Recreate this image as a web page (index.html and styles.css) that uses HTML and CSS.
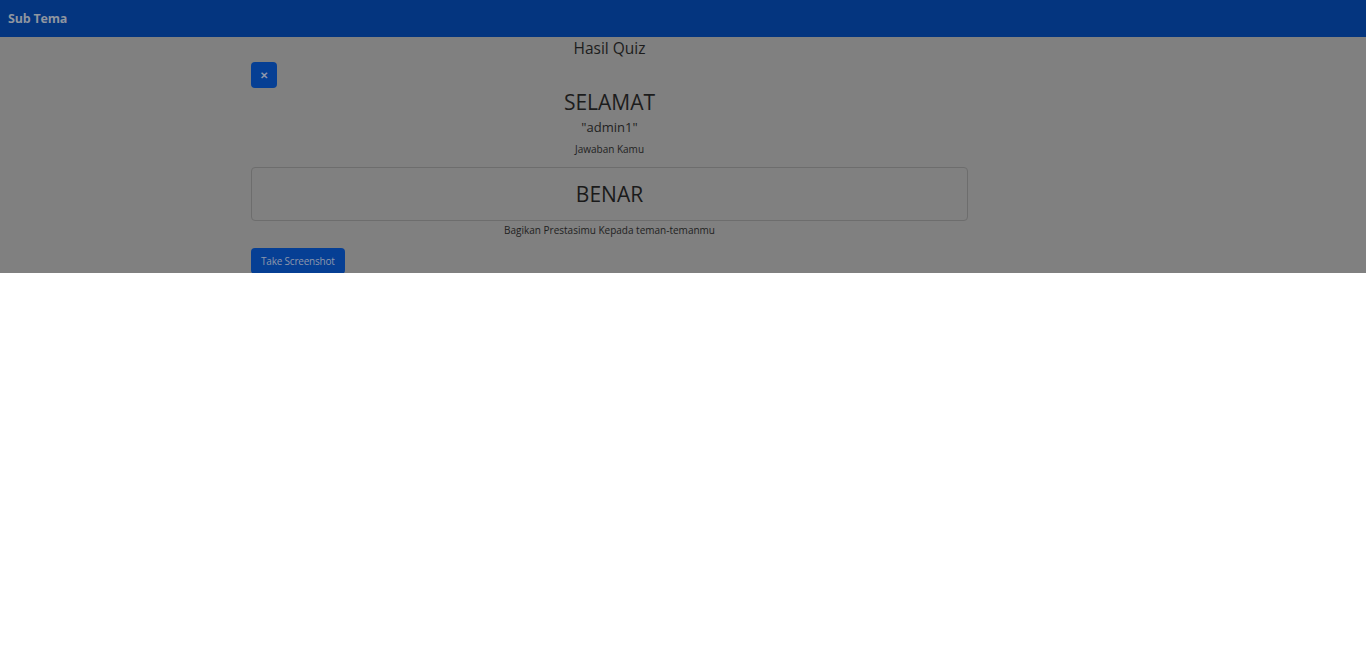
FILE: index.html
```html
<!DOCTYPE html>
<html>
<head>
<meta charset="utf-8">
<link rel="stylesheet" href="styles.css">
</head>
<body>
<header class="navbar"><span class="brand">Sub Tema</span></header>
<section class="overlay">
  <div class="modal">
    <div class="title">Hasil Quiz</div>
    <div class="close-row"><button class="btn close-btn">&#x2715;</button></div>
    <div class="selamat">SELAMAT</div>
    <div class="user">"admin1"</div>
    <div class="small">Jawaban Kamu</div>
    <div class="answer">BENAR</div>
    <div class="small share">Bagikan Prestasimu Kepada teman-temanmu</div>
    <div class="shot-row"><button class="btn shot-btn">Take Screenshot</button></div>
  </div>
</section>
</body>
</html>
```
FILE: styles.css
```css
* { box-sizing: border-box; }
body {
  margin: 0;
  font-family: "Open Sans", "Noto Sans", sans-serif;
  background: #fff;
  color: #1a1a1a;
}
.navbar {
  height: 37px;
  background: #04357f;
  display: flex;
  align-items: center;
  padding: 0 8px;
}
.brand {
  color: #8f95a0;
  font-weight: 700;
  font-size: 12.5px;
  letter-spacing: -0.2px;
}
.overlay {
  background: #808080;
  height: 236px;
  overflow: hidden;
}
.modal {
  width: 717px;
  margin-left: 251px;
  display: flex;
  flex-direction: column;
  align-items: center;
}
.title {
  font-size: 15.5px;
  line-height: 20px;
  margin-top: 1px;
  color: #1c1c1c;
}
.close-row, .shot-row {
  align-self: stretch;
  display: flex;
}
.btn {
  border: none;
  background: #063f94;
  color: #8e97ab;
  border-radius: 4px;
  font-family: inherit;
  padding: 0;
}
.close-btn {
  width: 26px;
  height: 26px;
  margin-top: 4px;
  font-size: 10px;
  font-weight: 700;
}
.selamat {
  font-size: 21px;
  line-height: 28px;
  color: #1c1c1c;
}
.user {
  font-size: 13px;
  line-height: 18px;
  margin-top: 2px;
  color: #222;
}
.small {
  font-size: 10px;
  line-height: 14px;
  margin-top: 6px;
  color: #1f1f1f;
}
.answer {
  align-self: stretch;
  margin-top: 11px;
  height: 54px;
  border: 1px solid #6d6d6d;
  border-radius: 4px;
  display: flex;
  align-items: center;
  justify-content: center;
  font-size: 21px;
  color: #1a1a1a;
}
.small.share {
  margin-top: 2px;
}
.shot-btn {
  margin-top: 11px;
  height: 26px;
  padding: 0 10px;
  font-size: 10px;
  letter-spacing: -0.2px;
}
```
